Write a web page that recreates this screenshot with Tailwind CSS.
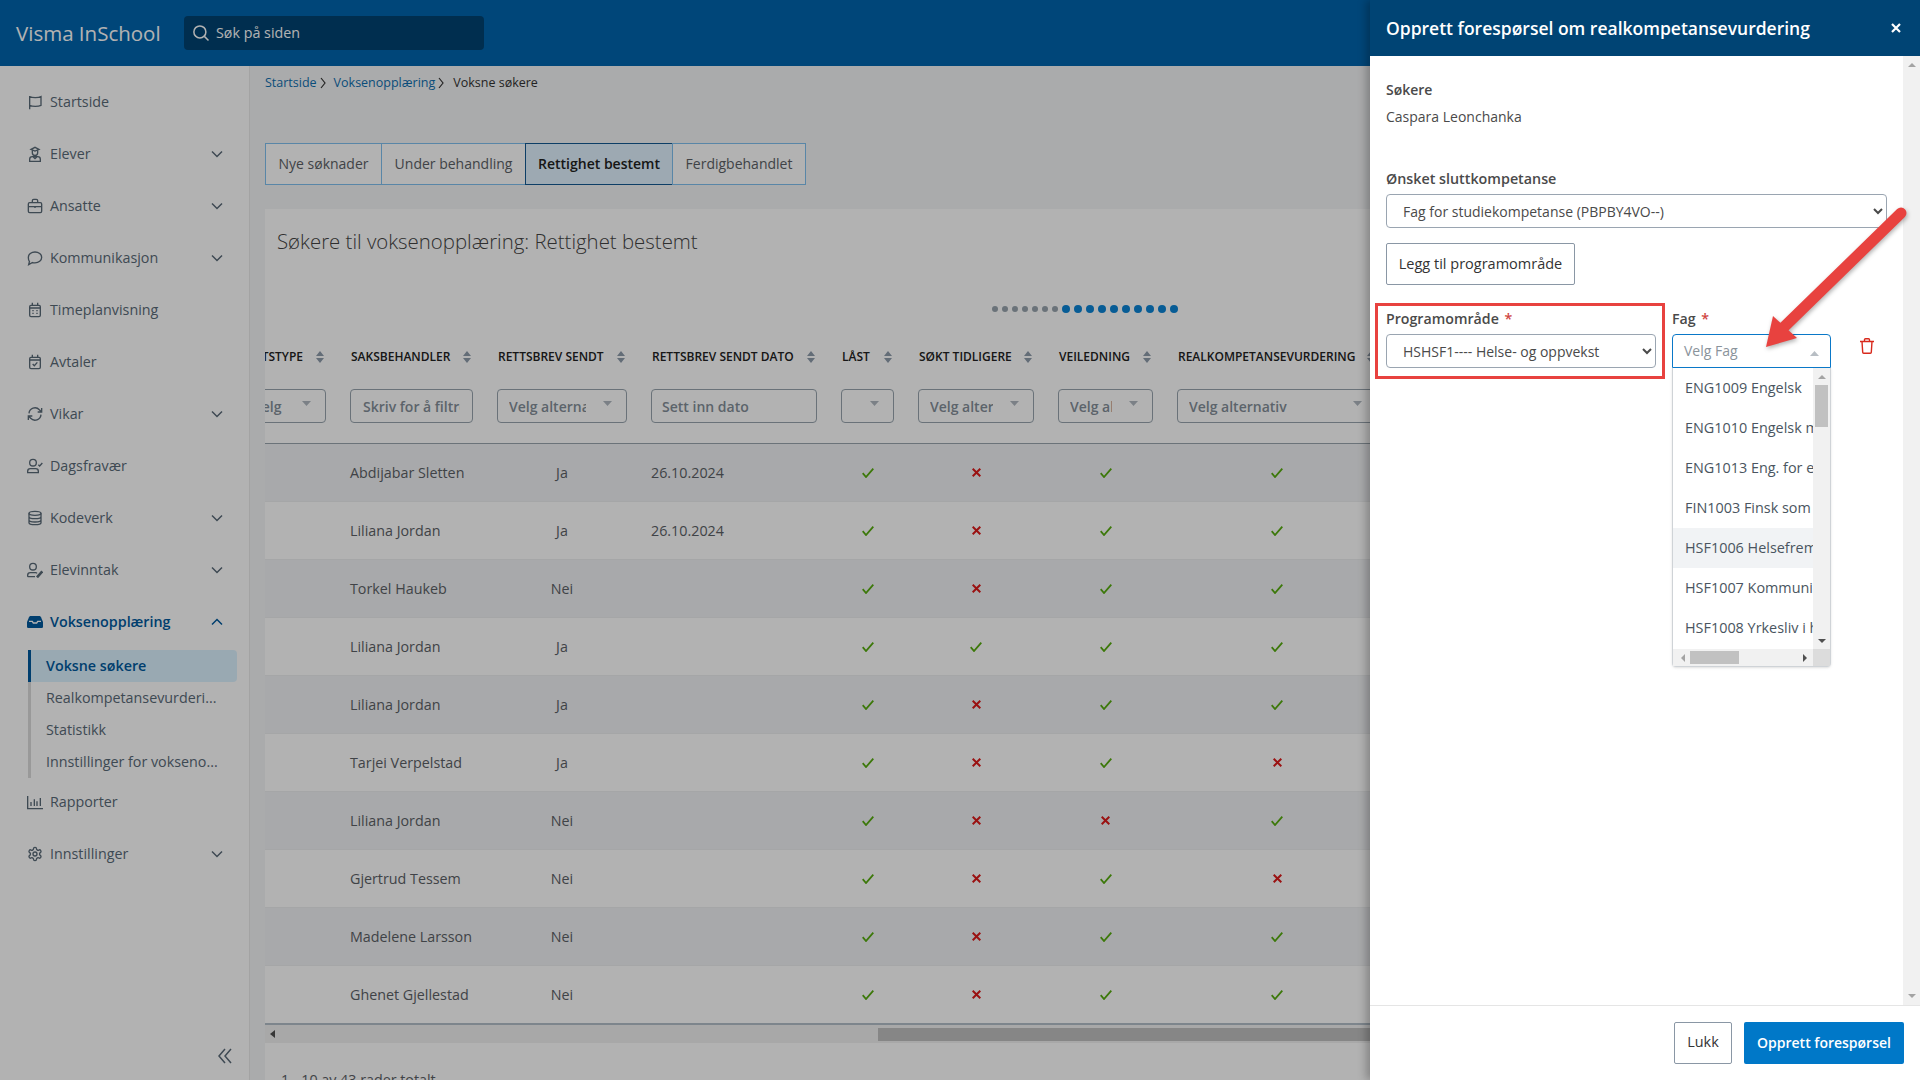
<!DOCTYPE html>
<html lang="no">
<head>
  <meta charset="UTF-8" />
  <title>Visma InSchool - Voksne søkere</title>
  <script src="https://cdn.jsdelivr.net/npm/@tailwindcss/browser@4"></script>
</head>
<body class="relative w-[1920px] h-[1080px] overflow-hidden bg-white text-[14px] text-[#5c6166] font-['Open_Sans',sans-serif]">

  <header class="h-[66px] bg-[#0065ae] flex items-center">
    <div class="w-[184px] pl-[16px] text-[20.5px] text-white">Visma InSchool</div>
    <div class="w-[300px] h-[34px] rounded bg-[#004372] flex items-center pl-[8px] gap-[6px] text-white">
      <svg class="w-[18px] h-[18px]" viewBox="0 0 24 24" fill="none" stroke="currentColor" stroke-width="2"><circle cx="10.5" cy="10.5" r="8"/><path d="M16.5 16.5 22 22"/></svg>
      <span class="text-[14.3px]">Søk på siden</span>
    </div>
  </header>

  <div class="flex h-[1014px]">
    <aside class="relative w-[250px] shrink-0 bg-white border-r border-[#eaeaea] pt-[9.5px] text-[14.3px] text-[#5a6a78]">
      <a class="h-[52px] flex items-center pl-[27px]">
        <svg class="w-[16px] h-[16px] mr-[7px]" viewBox="0 0 24 24" fill="none" stroke="currentColor" stroke-width="2"><path d="M4 23V3M4 4c4 2 13 2 17 0v13c-4 2-13 2-17 0"/></svg>
        <span>Startside</span>
      </a>
      <a class="h-[52px] flex items-center pl-[27px] pr-[26px]">
        <svg class="w-[16px] h-[16px] mr-[7px]" viewBox="0 0 24 24" fill="none" stroke="currentColor" stroke-width="2"><path d="M6 5l6-3 6 3-6 2.5zM8 7v3a4 4 0 0 0 8 0V7M4 23v-3a4 4 0 0 1 4-4h8a4 4 0 0 1 4 4v3zM9 16l3 3 3-3"/></svg>
        <span>Elever</span>
        <svg class="ml-auto w-[12px] h-[12px]" viewBox="0 0 12 12" fill="none" stroke="currentColor" stroke-width="1.5"><path d="M1 3.5 6 8.5 11 3.5"/></svg>
      </a>
      <a class="h-[52px] flex items-center pl-[27px] pr-[26px]">
        <svg class="w-[16px] h-[16px] mr-[7px]" viewBox="0 0 24 24" fill="none" stroke="currentColor" stroke-width="2"><rect x="2" y="7" width="20" height="15" rx="2"/><path d="M8 7V4a2 2 0 0 1 2-2h4a2 2 0 0 1 2 2v3M2 13h20M12 12v3"/></svg>
        <span>Ansatte</span>
        <svg class="ml-auto w-[12px] h-[12px]" viewBox="0 0 12 12" fill="none" stroke="currentColor" stroke-width="1.5"><path d="M1 3.5 6 8.5 11 3.5"/></svg>
      </a>
      <a class="h-[52px] flex items-center pl-[27px] pr-[26px]">
        <svg class="w-[16px] h-[16px] mr-[7px]" viewBox="0 0 24 24" fill="none" stroke="currentColor" stroke-width="2"><path d="M12 3c5.500 0 10 3.600 10 8.200s-4.500 8.200-10 8.200c-1.300 0-2.600-.2-3.700-.6L2.500 22l1.200-4.800C2.600 15.800 2 13.600 2 11.200 2 6.600 6.500 3 12 3z"/></svg>
        <span>Kommunikasjon</span>
        <svg class="ml-auto w-[12px] h-[12px]" viewBox="0 0 12 12" fill="none" stroke="currentColor" stroke-width="1.5"><path d="M1 3.5 6 8.5 11 3.5"/></svg>
      </a>
      <a class="h-[52px] flex items-center pl-[27px]">
        <svg class="w-[16px] h-[16px] mr-[7px]" viewBox="0 0 24 24" fill="none" stroke="currentColor" stroke-width="2"><rect x="4" y="5" width="16" height="17" rx="2"/><path d="M8 1v5M16 1v5M4 9h16M8 13h2M14 13h2M8 17h2M14 17h2"/></svg>
        <span>Timeplanvisning</span>
      </a>
      <a class="h-[52px] flex items-center pl-[27px]">
        <svg class="w-[16px] h-[16px] mr-[7px]" viewBox="0 0 24 24" fill="none" stroke="currentColor" stroke-width="2"><rect x="4" y="5" width="16" height="17" rx="2"/><path d="M8 1v5M16 1v5M4 9h16M8.500 15l2.500 2.500 4.500-5"/></svg>
        <span>Avtaler</span>
      </a>
      <a class="h-[52px] flex items-center pl-[27px] pr-[26px]">
        <svg class="w-[16px] h-[16px] mr-[7px]" viewBox="0 0 24 24" fill="none" stroke="currentColor" stroke-width="2"><path d="M3 11a9 9 0 0 1 15.500-5.500L22 9M22 3v6h-6M21 13a9 9 0 0 1-15.500 5.500L2 15M2 21v-6h6"/></svg>
        <span>Vikar</span>
        <svg class="ml-auto w-[12px] h-[12px]" viewBox="0 0 12 12" fill="none" stroke="currentColor" stroke-width="1.5"><path d="M1 3.5 6 8.500 11 3.5"/></svg>
      </a>
      <a class="h-[52px] flex items-center pl-[27px]">
        <svg class="w-[16px] h-[16px] mr-[7px]" viewBox="0 0 24 24" fill="none" stroke="currentColor" stroke-width="2"><circle cx="9" cy="7" r="5"/><path d="M1 22v-2a4 4 0 0 1 4-4h8a4 4 0 0 1 4 4v2zM17 10l2 2 4-4.500"/></svg>
        <span>Dagsfravær</span>
      </a>
      <a class="h-[52px] flex items-center pl-[27px] pr-[26px]">
        <svg class="w-[16px] h-[16px] mr-[7px]" viewBox="0 0 24 24" fill="none" stroke="currentColor" stroke-width="2"><ellipse cx="12" cy="5" rx="9" ry="3"/><path d="M3 5v14c0 1.700 4 3 9 3s9-1.300 9-3V5M3 10c0 1.700 4 3 9 3s9-1.300 9-3M3 15c0 1.700 4 3 9 3s9-1.300 9-3"/></svg>
        <span>Kodeverk</span>
        <svg class="ml-auto w-[12px] h-[12px]" viewBox="0 0 12 12" fill="none" stroke="currentColor" stroke-width="1.5"><path d="M1 3.5 6 8.5 11 3.5"/></svg>
      </a>
      <a class="h-[52px] flex items-center pl-[27px] pr-[26px]">
        <svg class="w-[16px] h-[16px] mr-[7px]" viewBox="0 0 24 24" fill="none" stroke="currentColor" stroke-width="2"><circle cx="9" cy="7" r="5"/><path d="M1 22v-2a4 4 0 0 1 4-4h8a3 3 0 0 1 2 1M1 22h11"/><path d="M15 23l8-9" stroke-width="4"/></svg>
        <span>Elevinntak</span>
        <svg class="ml-auto w-[12px] h-[12px]" viewBox="0 0 12 12" fill="none" stroke="currentColor" stroke-width="1.5"><path d="M1 3.5 6 8.5 11 3.5"/></svg>
      </a>
      <a class="h-[52px] flex items-center pl-[27px] pr-[26px] font-semibold text-[#005a9e]">
        <svg class="w-[16px] h-[16px] mr-[7px]" viewBox="0 0 24 24"><path fill="currentColor" d="M6 3h12c1.500 0 2.400.8 3 2l3 7v7a2 2 0 0 1-2 2H2a2 2 0 0 1-2-2v-7l3-7c.6-1.200 1.500-2 3-2z"/><path fill="none" stroke="#fff" stroke-width="2" d="M3 11h5l1.500 2.500h5L16 11h5"/></svg>
        <span>Voksenopplæring</span>
        <svg class="ml-auto w-[12px] h-[12px]" viewBox="0 0 12 12" fill="none" stroke="currentColor" stroke-width="1.5"><path d="M1 8.5 6 3.5 11 8.5"/></svg>
      </a>
      <div class="ml-[28px] w-[209px] border-l-[3px] border-[#dcdcdc] mt-[2px]">
        <a class="-ml-[3px] h-[32px] flex items-center pl-[15px] border-l-[3px] border-[#005a9e] bg-[#dcf2ff] rounded-r font-semibold text-[#005a9e]">Voksne søkere</a>
        <a class="h-[32px] flex items-center pl-[15px]">Realkompetansevurderi...</a>
        <a class="h-[32px] flex items-center pl-[15px]">Statistikk</a>
        <a class="h-[32px] flex items-center pl-[15px]">Innstillinger for vokseno...</a>
      </div>
      <a class="-mt-[1.5px] h-[52px] flex items-center pl-[27px]">
        <svg class="w-[16px] h-[16px] mr-[7px]" viewBox="0 0 24 24" fill="none" stroke="currentColor" stroke-width="2"><path d="M1 3v19h23M6 18v-6M11 18V8M15 18v-7M20 18V6"/></svg>
        <span>Rapporter</span>
      </a>
      <a class="h-[52px] flex items-center pl-[27px] pr-[26px]">
        <svg class="w-[16px] h-[16px] mr-[7px]" viewBox="0 0 24 24" fill="none" stroke="currentColor" stroke-width="2"><path d="M12.220 2h-.44a2 2 0 0 0-2 2v.18a2 2 0 0 1-1 1.730l-.43.25a2 2 0 0 1-2 0l-.15-.08a2 2 0 0 0-2.730.73l-.22.38a2 2 0 0 0 .73 2.730l.15.1a2 2 0 0 1 1 1.720v.51a2 2 0 0 1-1 1.740l-.15.09a2 2 0 0 0-.73 2.730l.22.38a2 2 0 0 0 2.730.73l.15-.08a2 2 0 0 1 2 0l.43.25a2 2 0 0 1 1 1.730V20a2 2 0 0 0 2 2h.44a2 2 0 0 0 2-2v-.18a2 2 0 0 1 1-1.730l.43-.25a2 2 0 0 1 2 0l.15.08a2 2 0 0 0 2.730-.73l.22-.39a2 2 0 0 0-.73-2.730l-.15-.08a2 2 0 0 1-1-1.740v-.5a2 2 0 0 1 1-1.740l.15-.09a2 2 0 0 0 .73-2.730l-.22-.38a2 2 0 0 0-2.730-.73l-.15.08a2 2 0 0 1-2 0l-.43-.25a2 2 0 0 1-1-1.730V4a2 2 0 0 0-2-2z"/><circle cx="12" cy="12" r="3"/></svg>
        <span>Innstillinger</span>
        <svg class="ml-auto w-[12px] h-[12px]" viewBox="0 0 12 12" fill="none" stroke="currentColor" stroke-width="1.5"><path d="M1 3.5 6 8.5 11 3.5"/></svg>
      </a>
      <svg class="absolute left-[218px] top-[982px] w-[14px] h-[16px]" viewBox="0 0 14 16" fill="none" stroke="currentColor" stroke-width="1.5"><path d="M7 1 1 8l6 7M13 1 7 8l6 7"/></svg>
    </aside>

    <main class="flex-1 min-w-0 bg-[#f4f5f6] pl-[15px] pt-[7px] flex flex-col">
      <nav class="h-[20px] flex items-center gap-[3px] text-[12.5px] text-[#0f6fb0]">
        <span>Startside</span>
        <svg class="w-[6px] h-[12px] mr-[5px]" viewBox="0 0 6 12" fill="none" stroke="#333" stroke-width="1.2"><path d="M1 1l4 5-4 5"/></svg>
        <span>Voksenopplæring</span>
        <svg class="w-[6px] h-[12px] mr-[6px]" viewBox="0 0 6 12" fill="none" stroke="#333" stroke-width="1.2"><path d="M1 1l4 5-4 5"/></svg>
        <span class="font-medium text-[#333]">Voksne søkere</span>
      </nav>

      <div class="mt-[50px] flex h-[42px] w-[541px] bg-white">
        <div class="w-[117px] pb-[2px] flex items-center justify-center border border-[#80c0f0]">Nye søknader</div>
        <div class="w-[145px] pb-[2px] -ml-[1px] flex items-center justify-center border border-[#80c0f0]">Under behandling</div>
        <div class="w-[148px] pb-[2px] -ml-[1px] flex items-center justify-center border border-[#135a92] bg-[#e1f3ff] font-semibold text-[#222]">Rettighet bestemt</div>
        <div class="w-[134px] pb-[2px] -ml-[1px] flex items-center justify-center border border-[#80c0f0]">Ferdigbehandlet</div>
      </div>

      <section class="mt-[24px] bg-white flex-1 min-h-0 overflow-hidden">
        <h1 class="pt-[18px] pl-[12px] h-[46px] text-[20.4px] leading-[28px] font-light text-[#444]">Søkere til voksenopplæring: Rettighet bestemt</h1>

        <div class="mt-[50px] ml-[727px] h-[8px] flex items-center">
          <i class="w-[6px] h-[6px] mr-[4px] rounded-full bg-[#98a4ae]"></i><i class="w-[6px] h-[6px] mr-[4px] rounded-full bg-[#98a4ae]"></i><i class="w-[6px] h-[6px] mr-[4px] rounded-full bg-[#98a4ae]"></i><i class="w-[6px] h-[6px] mr-[4px] rounded-full bg-[#98a4ae]"></i><i class="w-[6px] h-[6px] mr-[4px] rounded-full bg-[#98a4ae]"></i><i class="w-[6px] h-[6px] mr-[4px] rounded-full bg-[#98a4ae]"></i><i class="w-[6px] h-[6px] mr-[4px] rounded-full bg-[#98a4ae]"></i>
          <i class="w-[8px] h-[8px] mr-[4px] rounded-full bg-[#0b84d6]"></i><i class="w-[8px] h-[8px] mr-[4px] rounded-full bg-[#0b84d6]"></i><i class="w-[8px] h-[8px] mr-[4px] rounded-full bg-[#0b84d6]"></i><i class="w-[8px] h-[8px] mr-[4px] rounded-full bg-[#0b84d6]"></i><i class="w-[8px] h-[8px] mr-[4px] rounded-full bg-[#0b84d6]"></i><i class="w-[8px] h-[8px] mr-[4px] rounded-full bg-[#0b84d6]"></i><i class="w-[8px] h-[8px] mr-[4px] rounded-full bg-[#0b84d6]"></i><i class="w-[8px] h-[8px] mr-[4px] rounded-full bg-[#0b84d6]"></i><i class="w-[8px] h-[8px] mr-[4px] rounded-full bg-[#0b84d6]"></i><i class="w-[8px] h-[8px] mr-[4px] rounded-full bg-[#0b84d6]"></i>
        </div>

        <div class="mt-[27px] overflow-hidden">
          <div id="table" class="-ml-[36px] w-[1160px]">
            <div id="headRow" class="grid grid-cols-[109px_147px_154px_190px_77px_140px_119px_224px] h-[34px] text-[12px] font-semibold text-[#222] uppercase"></div>
            <div id="filterRow" class="grid grid-cols-[109px_147px_154px_190px_77px_140px_119px_224px] pt-[15px] pb-[20px] border-b border-[#9aa5ae]"></div>
            <div id="rows"></div>
          </div>
        </div>

        <div class="-mt-[1px] h-[18px] flex items-center bg-[#f1f1f1] border-t-[2px] border-[#b4bfc9] box-content">
          <svg class="ml-[5px] w-[6px] h-[8px]" viewBox="0 0 6 8"><path fill="#505050" d="M5 0v8L0 4z"/></svg>
          <div class="ml-[602px] w-[600px] h-[13px] bg-[#c1c1c1]"></div>
        </div>
        <p class="mt-[27px] pl-[16px] leading-[20px] text-[14.3px]">1 - 10 av 43 rader totalt</p>
      </section>
    </main>
  </div>

  <!-- dimmed backdrop behind the drawer -->
  <div class="absolute inset-0 bg-black/30"></div>

  <aside class="absolute top-0 right-0 w-[550px] h-full bg-white flex flex-col shadow-[-4px_0_8px_rgba(0,0,0,0.25)] text-[#4a4a4a]">
    <div class="h-[56px] shrink-0 bg-[#004474] flex items-center justify-between pl-[16px] pr-[19px] text-white">
      <h2 class="pt-[1px] text-[17.5px] font-semibold">Opprett forespørsel om realkompetansevurdering</h2>
      <svg class="w-[10px] h-[10px]" viewBox="0 0 10 10" fill="none" stroke="#fff" stroke-width="2.2"><path d="M1 1l8 8M9 1 1 9"/></svg>
    </div>

    <div class="flex flex-1 min-h-0">
      <div class="flex-1 pl-[16px] pr-[16px]">
        <p class="mt-[24px] h-[20px] leading-[20px] font-semibold">Søkere</p>
        <p class="mt-[7px] h-[20px] leading-[20px]">Caspara Leonchanka</p>
        <label class="block mt-[42px] h-[20px] leading-[20px] text-[14.3px] font-semibold">Ønsket sluttkompetanse</label>
        <select class="block mt-[5px] w-[501px] h-[34px] pl-[12px] border border-[#9aa5b1] rounded bg-white text-[#4a4a4a] appearance-auto">
          <option>Fag for studiekompetanse (PBPBY4VO--)</option>
        </select>
        <button class="block mt-[15px] w-[189px] h-[42px] pb-[1px] border border-[#8a97a5] rounded-[2px] text-[14.5px] font-medium text-[#333]">Legg til programområde</button>

        <div class="mt-[18px] flex">
          <div class="relative w-[270px]">
            <div class="absolute -left-[11px] top-0 w-[290px] h-[76px] border-[3px] border-[#e8423f]"></div>
            <label class="block pt-[6px] h-[31px] leading-[20px] text-[14.2px] font-semibold">Programområde <span class="ml-[2px] text-[#d0453f]">*</span></label>
            <select class="block w-[270px] h-[34px] pl-[12px] border border-[#9aa5b1] rounded bg-white text-[#4a4a4a] appearance-auto">
              <option>HSHSF1---- Helse- og oppvekst</option>
            </select>
          </div>
          <div class="ml-[16px] w-[159px]">
            <label class="block pt-[6px] h-[31px] leading-[20px] text-[14.2px] font-semibold">Fag <span class="ml-[2px] text-[#d0453f]">*</span></label>
            <div class="relative h-[34px] pb-[2px] border border-[#0a78c8] rounded-t flex items-center pl-[11px] text-[#8a939b]">
              Velg Fag
              <svg class="absolute right-[11px] top-[16px] w-[9px] h-[5px]" viewBox="0 0 9 5"><path fill="#b8bec4" d="M4.500 0 9 5H0z"/></svg>
            </div>
            <div class="h-[299px] flex flex-col border-x border-b border-[#cfd3d7] rounded-b shadow-sm">
              <div class="flex h-[281px]">
                <ul class="w-[141px] overflow-hidden whitespace-nowrap text-[14.4px] text-[#4a5560]">
                  <li class="h-[40px] pb-[1px] pl-[12px] flex items-center">ENG1009 Engelsk</li>
                  <li class="h-[40px] pb-[1px] pl-[12px] flex items-center">ENG1010 Engelsk muntlig</li>
                  <li class="h-[40px] pb-[1px] pl-[12px] flex items-center">ENG1013 Eng. for elever</li>
                  <li class="h-[40px] pb-[1px] pl-[12px] flex items-center">FIN1003 Finsk som andrespråk</li>
                  <li class="h-[40px] pb-[1px] pl-[12px] flex items-center bg-[#f1f3f5]">HSF1006 Helsefremmende</li>
                  <li class="h-[40px] pb-[1px] pl-[12px] flex items-center">HSF1007 Kommunikasjon</li>
                  <li class="h-[40px] pb-[1px] pl-[12px] flex items-center">HSF1008 Yrkesliv i helse</li>
                </ul>
                <div class="w-[17px] bg-[#f1f1f1] flex flex-col items-center">
                  <svg class="mt-[7px] w-[8px] h-[4px]" viewBox="0 0 8 4"><path fill="#a3a3a3" d="M4 0l4 4H0z"/></svg>
                  <div class="mt-[6px] w-[13px] h-[42px] bg-[#c1c1c1]"></div>
                  <svg class="mt-auto mb-[6px] w-[8px] h-[4px]" viewBox="0 0 8 4"><path fill="#505050" d="M0 0h8L4 4z"/></svg>
                </div>
              </div>
              <div class="flex h-[17px] bg-[#f1f1f1]">
                <div class="w-[141px] flex items-center">
                  <svg class="ml-[8px] w-[4px] h-[8px]" viewBox="0 0 4 8"><path fill="#a3a3a3" d="M4 0v8L0 4z"/></svg>
                  <div class="ml-[5px] w-[49px] h-[13px] bg-[#c1c1c1]"></div>
                  <svg class="ml-auto mr-[6px] w-[4px] h-[8px]" viewBox="0 0 4 8"><path fill="#505050" d="M0 0v8l4-4z"/></svg>
                </div>
                <div class="w-[17px] bg-[#dcdcdc]"></div>
              </div>
            </div>
          </div>
          <svg class="ml-[29px] mt-[35px] w-[14px] h-[16px]" viewBox="0 0 14 16" fill="none" stroke="#d8291c" stroke-width="1.400"><path d="M0 3.500h14M4.500 3.500V1.800a1 1 0 0 1 1-1h3a1 1 0 0 1 1 1v1.700M2 3.500l.7 10.700a1 1 0 0 0 1 1h6.600a1 1 0 0 0 1-1L12 3.500"/></svg>
        </div>
      </div>
      <div class="w-[17px] bg-[#f1f1f1] flex flex-col items-center">
        <svg class="mt-[7px] w-[8px] h-[4px]" viewBox="0 0 8 4"><path fill="#a3a3a3" d="M4 0l4 4H0z"/></svg>
        <svg class="mt-auto mb-[7px] w-[8px] h-[4px]" viewBox="0 0 8 4"><path fill="#a3a3a3" d="M0 0h8L4 4z"/></svg>
      </div>
    </div>

    <footer class="h-[75px] shrink-0 border-t border-[#e5e5e5] flex items-start justify-end gap-[12px] pt-[16px] pr-[16px]">
      <button class="w-[58px] h-[42px] pb-[2px] border border-[#8a97a5] rounded-[2px] text-[14.4px] font-medium text-[#333]">Lukk</button>
      <button class="w-[160px] h-[42px] pb-[2px] rounded-[2px] bg-[#0078c8] font-semibold text-white">Opprett forespørsel</button>
    </footer>
  </aside>

  <!-- red annotation arrow -->
  <svg class="absolute inset-0 w-[1920px] h-[1080px] pointer-events-none drop-shadow-[1px_2px_2px_rgba(0,0,0,0.3)]" viewBox="0 0 1920 1080">
    <path d="M1901 213 1784 327" stroke="#e8423f" stroke-width="11" stroke-linecap="round" fill="none"/>
    <path fill="#e8423f" d="M1766 347 1773 316 1797 338z"/>
  </svg>

  <script>
    const cols = [
      { title: 'Rettstype', type: 'select', w: 'w-[85px]', right: true },
      { title: 'Saksbehandler', type: 'input', w: 'w-[123px]' },
      { title: 'Rettsbrev sendt', type: 'select', w: 'w-[130px]' },
      { title: 'Rettsbrev sendt dato', type: 'date', w: 'w-[166px]' },
      { title: 'Låst', type: 'empty', w: 'w-[53px]' },
      { title: 'Søkt tidligere', type: 'select', w: 'w-[116px]' },
      { title: 'Veiledning', type: 'select', w: 'w-[95px]' },
      { title: 'Realkompetansevurdering', type: 'select', w: 'w-[200px]' }
    ];

    const sortIcon = '<svg class="shrink-0 w-[8px] h-[12px] mr-[2px]" viewBox="0 0 8 12"><path fill="#8e9cab" d="M4 0l4 5H0zM4 12 0 7h8z"/></svg>';
    const caret = '<svg class="absolute right-[14px] top-[11px] w-[9px] h-[5px]" viewBox="0 0 9 5"><path fill="#b0b8c0" d="M0 0h9L4.500 5z"/></svg>';

    document.getElementById('headRow').innerHTML = cols.map(c =>
      `<div class="pl-[12px] flex items-center"><div class="${c.w} flex items-center ${c.right ? 'justify-end gap-[13px]' : 'justify-between'}"><span class="ml-[1px] whitespace-nowrap">${c.title}</span>${sortIcon}</div></div>`
    ).join('');

    document.getElementById('filterRow').innerHTML = cols.map(c => {
      const box = 'relative h-[34px] border border-[#98a4ae] rounded flex items-center font-semibold text-[#848f99] overflow-hidden';
      let inner = '';
      if (c.type === 'select') inner = `<span class="flex-1 min-w-0 block ml-[11px] mr-[40px] whitespace-nowrap overflow-hidden">Velg alternativ</span>${caret}`;
      if (c.type === 'empty') inner = caret;
      if (c.type === 'input') inner = '<span class="block mx-[12px] whitespace-nowrap overflow-hidden">Skriv for å filtrere</span>';
      if (c.type === 'date') inner = '<span class="block px-[10px] whitespace-nowrap">Sett inn dato</span>';
      return `<div class="pl-[12px]"><div class="${c.w} ${box}">${inner}</div></div>`;
    }).join('');

    const ok = '<svg class="w-[12px] h-[10px]" viewBox="0 0 12 10" fill="none" stroke="#57ad0f" stroke-width="1.800"><path d="M.7 5.200 4 9 11.300.7"/></svg>';
    const no = '<svg class="w-[9px] h-[9px]" viewBox="0 0 9 9" fill="none" stroke="#dd1a1a" stroke-width="2"><path d="M.7.7l7.600 7.600M8.300.7.7 8.300"/></svg>';

    const data = [
      ['Abdijabar Sletten', 'Ja', '26.10.2024', 1, 0, 1, 1],
      ['Liliana Jordan', 'Ja', '26.10.2024', 1, 0, 1, 1],
      ['Torkel Haukeb', 'Nei', '', 1, 0, 1, 1],
      ['Liliana Jordan', 'Ja', '', 1, 1, 1, 1],
      ['Liliana Jordan', 'Ja', '', 1, 0, 1, 1],
      ['Tarjei Verpelstad', 'Ja', '', 1, 0, 1, 0],
      ['Liliana Jordan', 'Nei', '', 1, 0, 0, 1],
      ['Gjertrud Tessem', 'Nei', '', 1, 0, 1, 0],
      ['Madelene Larsson', 'Nei', '', 1, 0, 1, 1],
      ['Ghenet Gjellestad', 'Nei', '', 1, 0, 1, 1]
    ];

    document.getElementById('rows').innerHTML = data.map((r, i) => {
      const bg = i % 2 === 0 ? 'bg-[#f1f3f5]' : 'bg-white';
      const mark = (v, w) => `<div class="pl-[12px] flex items-center justify-center ${w}">${v ? ok : no}</div>`;
      return `<div class="grid grid-cols-[109px_147px_154px_190px_77px_140px_119px_224px] h-[58px] items-center text-[14.3px] ${bg} border-b border-[#eceef0]">
        <div></div>
        <div class="pl-[12px]">${r[0]}</div>
        <div class="px-[12px] text-center">${r[1]}</div>
        <div class="pl-[12px]">${r[2]}</div>
        ${mark(r[3], 'w-[65px]')}${mark(r[4], 'w-[128px]')}${mark(r[5], 'w-[107px]')}${mark(r[6], 'w-[212px]')}
      </div>`;
    }).join('');
  </script>
</body>
</html>
